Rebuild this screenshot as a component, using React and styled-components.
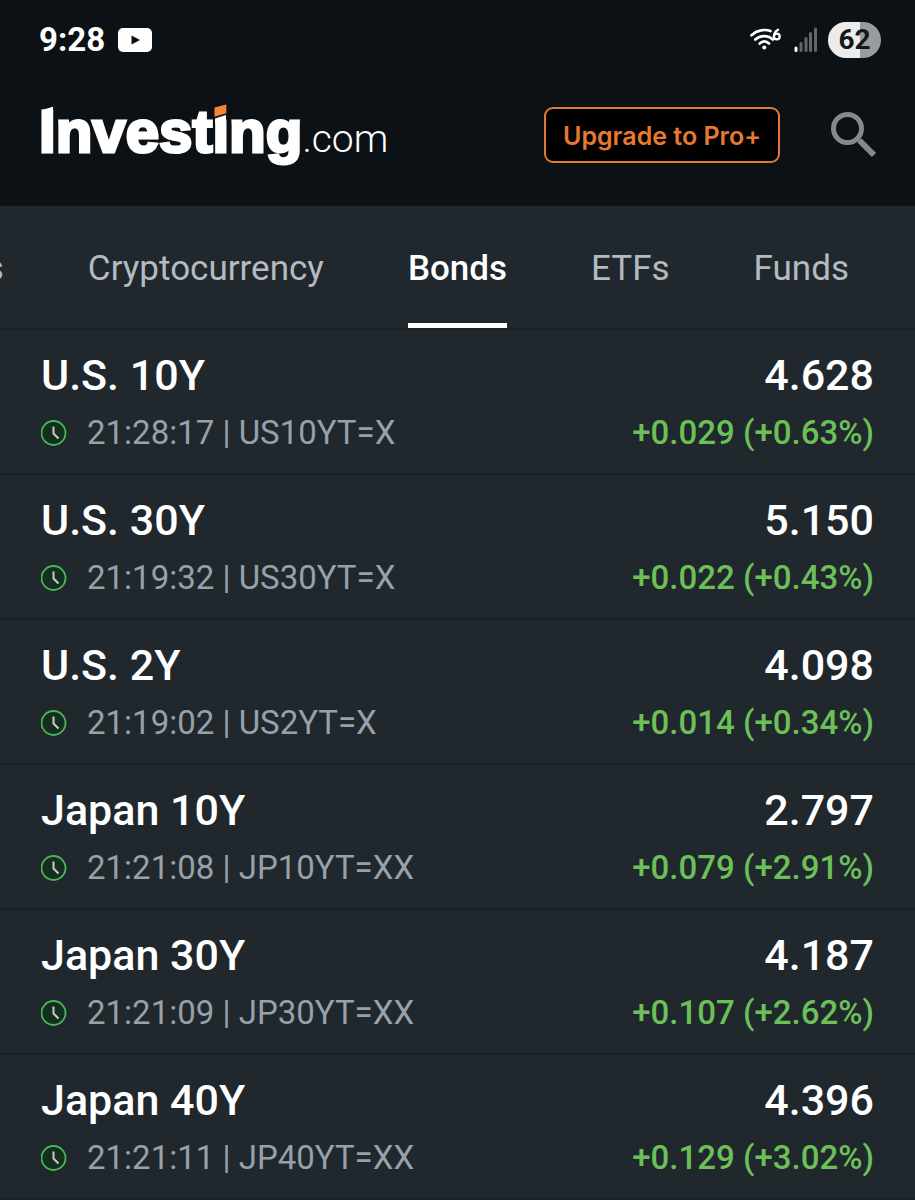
import React from "react";
import styled, { createGlobalStyle } from "styled-components";

const GlobalStyle = createGlobalStyle`
  *, *::before, *::after { box-sizing: border-box; }
  body {
    margin: 0;
    background: #20272d;
    color: #ffffff;
    font-family: Roboto, "Liberation Sans", sans-serif;
  }
`;

const Screen = styled.div`
  width: 100%;
  overflow: hidden;
`;

const TopArea = styled.div`
  background: #0c1115;
`;

const StatusBar = styled.div`
  display: flex;
  align-items: center;
  justify-content: space-between;
  height: 80px;
  padding: 0 34px 0 39px;
`;

const StatusGroup = styled.div`
  display: flex;
  align-items: center;
  gap: ${(p) => p.$gap}px;
`;

const Clock = styled.time`
  font-size: 33px;
  font-weight: 700;
  line-height: 40px;
`;

const Battery = styled.div`
  display: flex;
  align-items: center;
  justify-content: center;
  width: 53px;
  height: 36px;
  border-radius: 18px;
  background: linear-gradient(to right, #ececec 61%, #989c9e 61%);
  color: #14181b;
  font-size: 28px;
  font-weight: 700;
  line-height: 36px;
`;

const Header = styled.header`
  display: flex;
  align-items: center;
  height: 126px;
  padding: 0 38px 16px 39px;
`;

const Logo = styled.a`
  display: flex;
  align-items: baseline;
  margin-right: auto;
  color: #ffffff;
  text-decoration: none;
  line-height: 72px;
`;

const LogoWord = styled.span`
  font-family: "Liberation Sans", Arial, sans-serif;
  font-size: 60px;
  font-weight: 700;
  -webkit-text-stroke: 3px #ffffff;
`;

const LogoLetter = styled.span`
  position: relative;

  svg {
    position: absolute;
    left: 0;
    top: 0;
  }
`;

const LogoSuffix = styled.span`
  font-size: 39px;
  font-weight: 300;
`;

const UpgradeButton = styled.button`
  height: 56px;
  padding: 2px 17px 0;
  border: 2px solid #e07a35;
  border-radius: 9px;
  background: #000000;
  color: #e87a30;
  font-family: Inter, sans-serif;
  font-size: 25px;
  font-weight: 600;
  line-height: 32px;
  white-space: nowrap;
`;

const IconButton = styled.button`
  display: flex;
  margin-left: 51px;
  padding: 0;
  border: 0;
  background: none;
  color: #84898d;
`;

const Tabs = styled.nav`
  display: flex;
  justify-content: flex-end;
  gap: 84px;
  height: 124px;
  padding-right: 66px;
  border-bottom: 2px solid #1a2026;
`;

const Tab = styled.a`
  flex: none;
  padding-top: 41px;
  border-bottom: 5px solid ${(p) => (p.$active ? "#ffffff" : "transparent")};
  color: ${(p) => (p.$active ? "#ffffff" : "#b4bac0")};
  font-size: 35px;
  font-weight: ${(p) => (p.$active ? 500 : 400)};
  line-height: 44px;
  text-decoration: none;
`;

const QuoteList = styled.ul`
  margin: 0;
  padding: 0;
  list-style: none;
`;

const QuoteRow = styled.li`
  display: flex;
  flex-direction: column;
  gap: 12px;
  padding: 19px 41px 20px;
  border-bottom: 2px solid #1a2026;
`;

const QuoteLine = styled.div`
  display: flex;
  align-items: center;
  justify-content: space-between;
`;

const Primary = styled.span`
  font-size: 43px;
  font-weight: 500;
  line-height: 52px;
`;

const Meta = styled.span`
  display: flex;
  align-items: center;
  gap: 20px;
  color: #98a0a8;
  font-size: 33px;
  line-height: 40px;
`;

const Change = styled.span`
  color: #6cc058;
  font-size: 33px;
  font-weight: 500;
  line-height: 40px;
`;

const YoutubeIcon = () => (
  <svg width="34" height="24" viewBox="0 0 34 24" aria-hidden="true">
    <rect width="34" height="24" rx="5" fill="#fff" />
    <path d="M13.500 7.500v9l8.500-4.500z" fill="#0c1115" />
  </svg>
);

const WifiIcon = () => (
  <svg width="32" height="24" viewBox="0 0 32 24" fill="none" aria-hidden="true">
    <g stroke="#fff" strokeWidth="2.700" strokeLinecap="round">
      <path d="M1.500 7.200C7 2 15 1 20.500 3" />
      <path d="M5.300 11.500c5-4.600 13-4.600 17.500 0" />
      <path d="M9.700 15.500c3-2.600 6.600-2.600 9.300 0" />
    </g>
    <circle cx="14.300" cy="19.500" r="2" fill="#fff" />
    <g stroke="#fff" strokeWidth="2.300" strokeLinecap="round">
      <circle cx="26.800" cy="8.500" r="2.900" />
      <path d="M23.900 8C24.300 5 25.500 3 28 1.800" />
    </g>
  </svg>
);

const SignalIcon = () => (
  <svg width="24" height="26" viewBox="0 0 24 26" strokeWidth="3" strokeLinecap="round" aria-hidden="true">
    <path d="M3 21v2.500" stroke="#fff" />
    <path d="M8 16.500v7M13 11.500v12M17.500 6.500v17M22.500 2v21.500" stroke="#62676b" />
  </svg>
);

const SearchIcon = () => (
  <svg width="46" height="46" viewBox="0 0 46 46" fill="none" stroke="currentColor" aria-hidden="true">
    <circle cx="16.500" cy="16.500" r="14" strokeWidth="5" />
    <path d="M28.500 28.500L43 43" strokeWidth="6" />
    <path d="M26 26l4 4" strokeWidth="3" />
  </svg>
);

const ClockIcon = () => (
  <svg width="26" height="26" viewBox="0 0 26 26" fill="none" aria-hidden="true">
    <circle cx="12.500" cy="13" r="12" fill="#12301d" stroke="#4fb457" strokeWidth="1.800" />
    <path d="M12.500 6.500v7l5 5" stroke="#cfc8d2" strokeWidth="2" />
  </svg>
);

const CapSlant = () => (
  <svg width="17" height="24" viewBox="0 0 17 24" aria-hidden="true">
    <path d="M3 12L14 8.700V16H3z" fill="#fff" />
  </svg>
);

const OrangeDot = () => (
  <svg width="17" height="26" viewBox="0 0 17 26" aria-hidden="true">
    <path d="M1 7h15v13H1z" fill="#0c1115" />
    <path d="M2.500 9.500L14.300 6.500V15.300L2.500 18.700z" fill="#f58536" />
    <path d="M3 20.500L14 17V25H3z" fill="#fff" />
  </svg>
);

const tabs = ["s", "Cryptocurrency", "Bonds", "ETFs", "Funds"];

const quotes = [
  { name: "U.S. 10Y", time: "21:28:17", symbol: "US10YT=X", last: "4.628", change: "+0.029 (+0.63%)" },
  { name: "U.S. 30Y", time: "21:19:32", symbol: "US30YT=X", last: "5.150", change: "+0.022 (+0.43%)" },
  { name: "U.S. 2Y", time: "21:19:02", symbol: "US2YT=X", last: "4.098", change: "+0.014 (+0.34%)" },
  { name: "Japan 10Y", time: "21:21:08", symbol: "JP10YT=XX", last: "2.797", change: "+0.079 (+2.91%)" },
  { name: "Japan 30Y", time: "21:21:09", symbol: "JP30YT=XX", last: "4.187", change: "+0.107 (+2.62%)" },
  { name: "Japan 40Y", time: "21:21:11", symbol: "JP40YT=XX", last: "4.396", change: "+0.129 (+3.02%)" },
];

export default function App() {
  return (
    <Screen>
      <GlobalStyle />
      <TopArea>
        <StatusBar>
          <StatusGroup $gap={13}>
            <Clock>9:28</Clock>
            <YoutubeIcon />
          </StatusGroup>
          <StatusGroup $gap={11}>
            <WifiIcon />
            <SignalIcon />
            <Battery>62</Battery>
          </StatusGroup>
        </StatusBar>
        <Header>
          <Logo href="#home">
            <LogoWord>
              <LogoLetter>I<CapSlant /></LogoLetter>nvest<LogoLetter>i<OrangeDot /></LogoLetter>ng
            </LogoWord>
            <LogoSuffix>.com</LogoSuffix>
          </Logo>
          <UpgradeButton type="button">Upgrade to Pro+</UpgradeButton>
          <IconButton type="button" aria-label="Search">
            <SearchIcon />
          </IconButton>
        </Header>
      </TopArea>
      <Tabs>
        {tabs.map((tab) => (
          <Tab key={tab} href={`#${tab}`} $active={tab === "Bonds"}>
            {tab}
          </Tab>
        ))}
      </Tabs>
      <QuoteList>
        {quotes.map((q) => (
          <QuoteRow key={q.symbol}>
            <QuoteLine>
              <Primary>{q.name}</Primary>
              <Primary>{q.last}</Primary>
            </QuoteLine>
            <QuoteLine>
              <Meta>
                <ClockIcon />
                {`${q.time} | ${q.symbol}`}
              </Meta>
              <Change>{q.change}</Change>
            </QuoteLine>
          </QuoteRow>
        ))}
      </QuoteList>
    </Screen>
  );
}
